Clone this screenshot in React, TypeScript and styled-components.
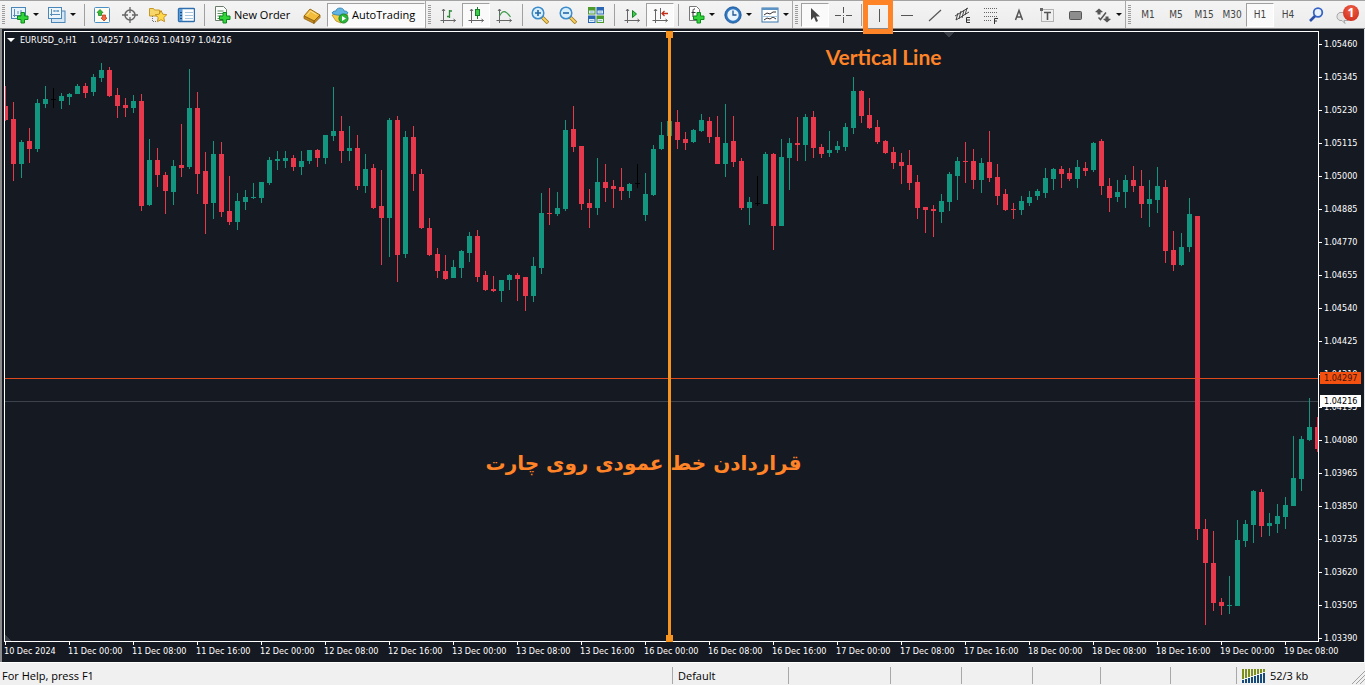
import React from 'react';
import styled, { createGlobalStyle, css } from 'styled-components';

const UI_FONT = '"Open Sans", "Noto Sans", sans-serif';
const CHART_FONT = '"DejaVu Sans Condensed", "DejaVu Sans", sans-serif';
const BULL = '#12967f';
const BEAR = '#e8384c';
const MARK = '#ff8427';
const LINE = '#f7941f';

const GlobalStyle = createGlobalStyle`
  * { box-sizing: border-box; }
  body { margin: 0; background: #f0f0f0; font-family: ${UI_FONT}; }
`;

const Terminal = styled.div`
  display: flex;
  flex-direction: column;
  height: 100vh;
  overflow: hidden;
`;

/* ---------- toolbar ---------- */

const Toolbar = styled.header`
  display: flex;
  flex: none;
  height: 29px;
  background: linear-gradient(#f4f4f4, #ececec);
  border-top: 1px solid #a3a3a3;
  border-bottom: 1px solid #8a8a8a;
`;

const Group = styled.div`
  display: flex;
  align-items: center;
  flex: none;
  & + & { box-shadow: -1px 0 0 #a8a8a8; }
`;

const Grip = styled.span<{ $narrow?: boolean }>`
  flex: none;
  width: ${p => (p.$narrow ? 6 : 8)}px;
  height: 20px;
  background: repeating-linear-gradient(#9c9c9c 0 1px, transparent 1px 2px) 2px 0 / 3px 20px no-repeat;
`;

const Separator = styled.span`
  flex: none;
  width: 8px;
  height: 22px;
  background: linear-gradient(#a0a0a0, #a0a0a0) 4px 0 / 1px 22px no-repeat;
`;

const Tool = styled.button<{ $pressed?: boolean; $menu?: boolean }>`
  position: relative;
  display: flex;
  align-items: center;
  flex: none;
  gap: 4px;
  width: ${p => (p.$menu ? 37 : 28)}px;
  height: 24px;
  padding: 0 4px;
  border: 1px solid transparent;
  background: none;
  color: #444;
  font: 10px/20px ${CHART_FONT};
  ${p => p.$pressed && css`
    background: #fafafa;
    border-color: #a0a0a0 #fff #fff #a0a0a0;
  `}
  svg { flex: none; display: block; }
`;

const Period = styled(Tool)`
  justify-content: center;
  padding: 0;
`;

const TextTool = styled(Tool)`
  width: auto;
  gap: 3px;
  color: #000;
  font: 11px/20px ${UI_FONT};
  white-space: nowrap;
`;

const OrderTool = styled(TextTool)`
  width: 90px;
`;

const AutoTool = styled(TextTool)`
  width: 98px;
  margin: 0 1px;
  padding: 0 3px;
`;

const Caret = styled.i`
  flex: none;
  border: 3px solid transparent;
  border-top-color: #111;
  border-bottom: 0;
`;

const Highlight = styled.span`
  position: absolute;
  inset: -4px -1px -8px -3px;
  border: 5px solid ${MARK};
  z-index: 3;
`;

const Spread = styled(Group)`
  flex: 1;
`;

const Notice = styled(Tool)`
  margin-left: auto;
  margin-right: 4px;
  padding: 0;
`;

const Badge = styled.span`
  position: absolute;
  right: 1px;
  top: 1px;
  width: 16px;
  height: 16px;
  border-radius: 50%;
  background: radial-gradient(circle at 50% 30%, #f0604a, #c92614);
  color: #fff;
  font: bold 12px/16px ${UI_FONT};
  text-align: center;
`;

/* ---------- chart window ---------- */

const ChartWindow = styled.main`
  flex: 1;
  min-height: 0;
  display: grid;
  grid-template-columns: minmax(0, 1fr) 45px;
  grid-template-rows: minmax(0, 1fr) 20px;
  padding: 2px 0 0 2px;
  background: #151922;
  border-left: 2px solid #8b8b8b;
  border-right: 1px solid #dfe3e8;
  color: #fff;
  font: 9px/12px ${CHART_FONT};
`;

const Plot = styled.section`
  position: relative;
  border: 1px solid #fff;
  min-height: 0;
`;

const PlotArt = styled.svg`
  display: block;
  width: 100%;
  height: 100%;
  overflow: hidden;
`;

const Quote = styled.h1`
  position: absolute;
  left: 2px;
  top: 2px;
  display: flex;
  align-items: center;
  gap: 5px;
  margin: 0;
  font: inherit;
  white-space: pre;
`;

const Instrument = styled.span`
  min-width: 65px;
`;

const QuoteCaret = styled.i`
  border: 4px solid transparent;
  border-top-color: #fff;
  border-bottom: 0;
`;

const Handle = styled.span<{ $bottom?: boolean }>`
  position: absolute;
  left: 50.6%;
  ${p => (p.$bottom ? 'bottom: -1px;' : 'top: -1px;')}
  width: 7px;
  height: 7px;
  margin-left: -3px;
  background: ${LINE};
`;

const ToolLabel = styled.div`
  position: absolute;
  left: 62.5%;
  top: 10px;
  color: ${MARK};
  font: bold 21px/30px Lato, sans-serif;
  white-space: nowrap;
`;

const Caption = styled.div`
  position: absolute;
  left: 36.6%;
  top: 68.3%;
  color: ${MARK};
  font: bold 20px/30px "DejaVu Sans", sans-serif;
  white-space: nowrap;
`;

const PriceAxis = styled.div`
  position: relative;
  display: flex;
  flex-direction: column;
  justify-content: space-between;
  margin: 7px 0 -2px;
`;

const Price = styled.span`
  display: flex;
  align-items: center;
  gap: 2px;
  height: 12px;
  &::before { content: ''; width: 3px; height: 1px; background: #fff; }
`;

const PriceTag = styled.span<{ $alert?: boolean }>`
  position: absolute;
  left: 1px;
  width: 41px;
  height: 12px;
  padding-left: 4px;
  background: ${p => (p.$alert ? '#f4500f' : '#fff')};
  color: ${p => (p.$alert ? '#3a1408' : '#000')};
`;

const TimeAxis = styled.div`
  grid-column: 1 / -1;
  display: grid;
  grid-template-columns: repeat(21, minmax(0, 1fr));
  padding-right: 16px;
`;

const Time = styled.span`
  white-space: nowrap;
  &::before { content: ''; display: block; width: 1px; height: 3px; margin-left: 1px; background: #fff; }
`;

/* ---------- status bar ---------- */

const StatusBar = styled.footer`
  flex: none;
  display: grid;
  grid-template-columns: minmax(0, 672fr) 116fr 102fr 71fr 71fr 68fr 70fr 66fr 129fr;
  height: 23px;
  padding: 4px 0 1px;
  background: #f0f0f0;
  border-top: 1px solid #fff;
  color: #000;
  font: 11px/17px ${UI_FONT};
`;

const StatusCell = styled.span`
  position: relative;
  display: flex;
  align-items: center;
  gap: 4px;
  padding-left: 5px;
  white-space: nowrap;
  border-left: 1px solid #a8a8a8;
  &:first-child { border-left: 0; padding-left: 2px; }
`;

const Resize = styled.svg`
  position: absolute;
  right: 0;
  bottom: 0;
`;

/* ---------- icons ---------- */

const Svg = ({ children }: { children: React.ReactNode }) => (
  <svg width="18" height="18" viewBox="0 0 18 18" fill="none" aria-hidden="true">{children}</svg>
);

const Plus = ({ x = 6, y = 6 }: { x?: number; y?: number }) => (
  <path transform={`translate(${x} ${y})`} d="M4 .5h3.500V4h3.500v3.500H7.500V11H4V7.500H.5V4H4z" fill="#31d53a" stroke="#0c8a1c" />
);

const Axes = ({ children }: { children?: React.ReactNode }) => (
  <Svg>
    <path d="M4.500 3v14M1.500 14.500h15M3 5l1.500-2L6 5M14.500 13l2 1.500-2 1.500" stroke="#666" />
    {children}
  </Svg>
);

const NewChartIcon = () => (
  <Svg>
    <rect x=".5" y="1.500" width="14" height="11" fill="#e9f3fb" stroke="#4b86b8" />
    <path d="M3.500 3v8M2 9.500h11M10 4v4M7 5v3" stroke="#5a8db8" />
    <Plus x={6} y={6} />
  </Svg>
);
const ProfilesIcon = () => (
  <Svg>
    <rect x="3.500" y="5" width="13.500" height="11.500" fill="#d5e6f4" stroke="#4b86b8" />
    <rect x=".5" y="1.500" width="13" height="11" fill="#eef6fc" stroke="#4b86b8" />
    <path d="M3.500 3v7M2 8.500h10M6 5h5M6 4v2M10 4v2" stroke="#5a8db8" />
  </Svg>
);
const MarketIcon = () => (
  <Svg>
    <rect x="1.500" y="1.500" width="15" height="15" rx="1" fill="#fffdf2" stroke="#4a90c8" />
    <path d="M7 3.500l3 3-1.500.5v2.500h-3V7L4 6.500z" fill="#35bd35" stroke="#137a1c" strokeWidth=".7" />
    <path d="M11 15l-3-3 1.500-.5V9h3v2.500l1.500.5z" fill="#f26a3d" stroke="#b2321a" strokeWidth=".7" />
  </Svg>
);
const TargetIcon = () => (
  <Svg>
    <circle cx="9" cy="9" r="5" stroke="#666" strokeWidth="1.500" />
    <path d="M9 1v6M9 11v6M1 9h6M11 9h6" stroke="#666" strokeWidth="1.300" />
  </Svg>
);
const FavoritesIcon = () => (
  <Svg>
    <path d="M.5 2.500h4l1 1.500h5v6H.5z" fill="#f7d66a" stroke="#c79a26" />
    <path d="M3.500 10v6M4 15.500h4" stroke="#777" strokeDasharray="1 1" />
    <path d="M12 4.500l1.800 3.700 4 .5-3 2.800.8 4.200L12 13.700l-3.600 2 .8-4.200-3-2.800 4-.5z" fill="#ffd84b" stroke="#bd8a1a" strokeWidth=".9" />
  </Svg>
);
const ListIcon = () => (
  <Svg>
    <rect x="1.500" y="2.500" width="16" height="13" rx="1" fill="#fff" stroke="#2f6fae" strokeWidth="1.400" />
    <path d="M2 3h3.500v12H2z" fill="#5b9bd8" />
    <path d="M8 6.500h8M8 9.500h8M8 12.500h8" stroke="#a9c6df" />
    <path d="M3 6.500h2M3 9.500h2M3 12.500h2" stroke="#1d4b7c" />
  </Svg>
);
const OrderIcon = () => (
  <Svg>
    <path d="M2.500.5h8l3 3v11h-11z" fill="#fbfdfb" stroke="#6b7c6b" />
    <path d="M4.500 5h6M4.500 7.500h7M4.500 10h4M4.500 12.500h4" stroke="#5d8b62" />
    <Plus x={6} y={6} />
  </Svg>
);
const EditorIcon = () => (
  <Svg>
    <path d="M1 10l6-7 10 6-6 6z" fill="#f3bd3b" stroke="#9b6c12" />
    <path d="M1 10v2.500L11 17.500V15zM11 15v2.500l6-6V9z" fill="#c98c1c" stroke="#8e6110" strokeWidth=".8" />
    <path d="M4 9.500L7.500 5l6 3.600" stroke="#fde39b" />
  </Svg>
);
const AutoIcon = () => (
  <Svg>
    <path d="M1 9l8-2 8 2-7 8-5-2z" fill="#f5cf4b" stroke="#b58c1c" strokeWidth=".8" />
    <path d="M1 7c1-2 3-2 4-2 0-4 8-4 8 0 2 0 3 0 4 2-3 3-13 3-16 0z" fill="#62b5e3" stroke="#2c7cae" strokeWidth=".8" />
    <circle cx="12.500" cy="12.500" r="4.600" fill="#2eb53c" stroke="#0f7a1e" strokeWidth=".8" />
    <path d="M11 10v5l4-2.500z" fill="#fff" />
  </Svg>
);
const BarsIcon = () => <Axes><path d="M10.500 4v8M8 10.500h2.500M10.500 5h2.500" stroke="#2f8a3b" strokeWidth="1.300" /></Axes>;
const CandleIcon = () => <Axes><path d="M10.500 1v12" stroke="#1b7a28" /><rect x="8.500" y="3.500" width="4" height="6" fill="#3ecb4a" stroke="#15812a" /></Axes>;
const LineIcon = () => <Axes><path d="M4.500 10c3-6 6-6 11 1" stroke="#3f9a4b" strokeWidth="1.200" /></Axes>;
const ZoomIcon = ({ plus }: { plus?: boolean }) => (
  <Svg>
    <path d="M11 11l6 6" stroke="#a27a1c" strokeWidth="3.600" />
    <path d="M11.500 11.500l5 5" stroke="#f5d265" strokeWidth="1.800" />
    <circle cx="7" cy="7" r="5.800" fill="#d8eefb" stroke="#3c8ccb" strokeWidth="1.500" />
    <path d={plus ? 'M4 7h6M7 4v6' : 'M4 7h6'} stroke="#2368a8" strokeWidth="1.600" />
  </Svg>
);
const TilesIcon = () => (
  <Svg>
    <path d="M1 1h7.500v7.500H1zM9.500 9.500H17V17H9.500z" fill="#4c9a2c" />
    <path d="M9.500 1H17v7.500H9.500zM1 9.500h7.500V17H1z" fill="#2b66b3" />
    <path d="M2 4.500h5.500v3H2zM10.500 4.500H16v3h-5.500zM2 13h5.500v3H2zM10.500 13H16v3h-5.500z" fill="#dcecf8" />
    <path d="M3 6h3.500M11.500 6H15M3 14.500h3.500M11.500 14.500H15" stroke="#8fb4cf" />
  </Svg>
);
const ScrollIcon = () => <Axes><path d="M9.500 4.500v7l4-3.500z" fill="#3ecb4a" stroke="#15812a" /></Axes>;
const ShiftIcon = () => <Axes><path d="M9.500 2v11" stroke="#666" /><path d="M11 7.500h6M13.500 5L11 7.500l2.500 2.500" stroke="#c22d1a" strokeWidth="1.300" /></Axes>;
const IndicatorIcon = () => (
  <Svg>
    <path d="M2.500.5h7l3 3v11h-10z" fill="#fff" stroke="#777" />
    <path d="M8 3c-2-.5-2 1-2 3v5M4.500 6.500h4" stroke="#333" />
    <Plus x={6} y={6} />
  </Svg>
);
const ClockIcon = () => (
  <Svg>
    <circle cx="9" cy="9" r="7" fill="#e8f4fd" stroke="#2f76bf" strokeWidth="2.600" />
    <circle cx="9" cy="9" r="8.200" stroke="#174f90" strokeWidth=".7" />
    <path d="M9 4.500V9h3.500" stroke="#20558f" strokeWidth="1.300" />
  </Svg>
);
const TemplateIcon = () => (
  <Svg>
    <rect x="1" y="2" width="16" height="14" fill="#fff" stroke="#3a78b0" />
    <path d="M1 3h16" stroke="#5b93c4" strokeWidth="2" />
    <path d="M3 9l3-2 3 1 3-2 3 0M3 14l3-2 3 1 3-2 3 2" stroke="#333" />
    <path d="M2 10.500h14" stroke="#a9c6df" />
  </Svg>
);
const CursorIcon = () => <Svg><path d="M5 2v12l3-3 2 5 2-1-2-4.500h4z" fill="#444" /></Svg>;
const CrossIcon = () => <Svg><path d="M9.500 1v6M9.500 11v6M1 9.500h6M12 9.500h6M9 9.500h1" stroke="#555" /></Svg>;
const VLineIcon = () => <Svg><path d="M9.500 3v13" stroke="#555" /></Svg>;
const HLineIcon = () => <Svg><path d="M3 9.500h12" stroke="#555" /></Svg>;
const TrendIcon = () => <Svg><path d="M3 15L15 4" stroke="#555" strokeWidth="1.200" /></Svg>;
const ChannelIcon = () => (
  <Svg>
    <path d="M1 10L14 2M2 14l13-8M4 7l-2 7M7 5l-2 8M10 4l-2 8M13 2l-2 7" stroke="#444" />
    <path d="M16 11.500h-3.500v5H16M12.500 14H16" stroke="#333" />
  </Svg>
);
const FiboIcon = () => (
  <Svg>
    <path d="M2 2.500h14M2 6.500h14M2 10.500h14M2 14.500h8" stroke="#666" strokeDasharray="1 1" />
    <path d="M16 12.500h-3.500V18M12.500 15H15" stroke="#333" />
  </Svg>
);
const LetterIcon = () => <Svg><path d="M5.500 14L9 4.500l3.500 9.500M7 11h4" stroke="#555" strokeWidth="1.500" /></Svg>;
const TextBoxIcon = () => (
  <Svg>
    <rect x="3.500" y="3.500" width="12" height="12" stroke="#777" strokeDasharray="1 1" />
    <path d="M6 6.500h7M9.500 6.500V14" stroke="#555" strokeWidth="1.600" />
    <path d="M2 2h3v3H2z" fill="#666" />
  </Svg>
);
const RectIcon = () => <Svg><rect x="3.500" y="5.500" width="12" height="8" rx="1" fill="#8d8d8d" stroke="#555" /></Svg>;
const ArrowsIcon = () => (
  <Svg>
    <path d="M5 2.500l4 3.500-2.500.5v2h-3v-2L1 6zM13 16.500L9 13l2.500-.5v-2h3v2L17 13z" fill="#555" />
    <path d="M4.500 11.500l2 2 5.500-7" stroke="#555" strokeWidth="1.500" />
  </Svg>
);
const SearchIcon = () => (
  <Svg>
    <circle cx="11" cy="6.500" r="4.300" fill="#eaf3fd" stroke="#3763c4" strokeWidth="1.800" />
    <path d="M8 10l-5 5" stroke="#2a4faa" strokeWidth="2.600" />
  </Svg>
);
const ChatIcon = () => <Svg><path d="M6 6.500h8v8h-4l1 3-3-3H6c-4-1-4-7 0-8z" fill="#e3e3e3" stroke="#a5a5a5" /></Svg>;

/* ---------- data ---------- */

type Candle = [kind: 'u' | 'd' | 'n', high: number, top: number, bottom: number, low: number];

const parseCandles = (source: string): Candle[] =>
  source.trim().split(/\s+/).map(item => {
    const [high, top, bottom, low] = item.slice(1).split(',').map(Number);
    return [item[0] as Candle[0], high, top, bottom, low];
  });

const candles = parseCandles(`
d86,106,120,121 d102,119,164,181 u140,142,164,178 d128,141,149,163 u99,103,149,152 u86,99,104,108
n88,99,100,108 u93,96,101,109 u93,94,97,105 u84,86,94,94 d83,86,93,98 u74,77,92,96 u63,70,78,82
d67,70,96,97 d88,95,106,118 d98,105,108,117 u95,101,108,113 d94,101,206,211 u139,160,205,206
d148,160,175,187 d172,175,191,214 u160,166,192,205 d124,165,168,177 u69,108,167,169 d92,108,174,194
d152,171,204,234 u141,154,203,219 d142,154,212,217 d176,211,222,225 u193,201,222,230 u190,197,202,210
u183,197,198,199 u182,182,198,203 u157,160,183,185 u151,159,161,170 u151,158,161,168 d155,158,167,171
u151,161,167,175 u150,150,161,164 d149,150,158,167 u135,135,158,164 u87,131,136,141 d116,131,151,163
u126,148,151,161 d135,148,186,190 u154,169,186,193 d164,168,208,209 d170,206,218,265 u118,120,218,257
d116,120,255,282 u131,137,254,258 d126,137,174,191 d169,174,228,229 d218,228,255,256 d248,254,271,278
d255,271,279,280 u260,267,278,278 u250,251,268,278 u232,236,253,262 d230,236,277,282 d271,275,290,291
d276,289,291,292 u280,280,291,302 u274,275,280,290 d273,275,279,301 d277,277,296,311 u257,266,296,302
u193,213,268,274 d188,213,214,225 u192,208,214,216 u120,130,209,211 d106,129,147,152 d146,146,204,210
d189,203,208,228 u158,182,208,215 d164,182,188,202 d180,186,189,208 d168,187,191,200 u183,184,191,198
n164,183,184,188 u173,194,215,221 u145,149,195,196 u122,135,149,150 u115,121,136,141 d110,122,140,149
d132,139,143,150 u129,130,142,143 u114,120,131,132 d117,121,137,143 d116,137,164,164 u104,143,164,177
d116,141,162,167 d158,161,208,210 u197,202,208,225 n176,203,204,206 u152,154,204,204 d153,154,226,250
u139,157,226,226 u138,143,158,190 d117,143,145,161 u114,117,145,161 d111,117,148,158 d144,147,154,158
u131,150,153,157 u141,146,150,153 u123,127,147,151 u77,91,128,134 d90,91,116,123 d98,115,128,129
d120,127,142,144 d140,141,153,154 d147,152,163,169 d153,162,166,184 d150,165,183,190 d175,182,208,219
d207,207,210,233 d205,209,211,237 u194,201,212,223 u172,174,202,211 u157,161,176,200 d142,161,162,183
d149,161,180,189 u158,163,180,193 d131,162,178,182 d164,177,196,205 d189,194,210,211 d203,209,210,219
u196,201,210,215 u191,197,203,206 u189,191,196,200 u168,178,193,198 u168,169,179,190 d166,169,174,188
d168,173,179,181 u160,167,179,188 d162,168,171,176 u142,143,170,172 d139,141,186,195 d178,186,198,212
u180,192,197,202 u175,180,192,208 d166,180,186,192 d170,186,204,218 u180,199,204,227 u167,186,200,213
d180,187,251,263 d231,250,265,271 u233,247,265,266 u198,214,247,252 d216,216,529,540 d519,529,563,625
d531,563,603,611 d598,602,606,615 u576,605,606,614 u520,540,606,606 u520,524,541,547 u490,491,525,543
d489,492,526,537 u513,523,526,536 u504,516,524,533 u497,505,517,529 u436,478,506,506 u436,439,479,491
u398,427,440,441 d417,427,449,452
`);

const MAX_PRICE = 1.0546;
const MIN_PRICE = 1.0339;
const prices = Array.from({ length: 19 }, (_, i) => (MAX_PRICE - i * 0.00115).toFixed(5));
const priceTop = (price: number) => `calc((100% - 12px) * ${(MAX_PRICE - price) / (MAX_PRICE - MIN_PRICE)})`;

const times = [
  '10 Dec 2024',
  ...[11, 12, 13, 16, 17, 18].flatMap(day => ['00:00', '08:00', '16:00'].map(hour => `${day} Dec ${hour}`)),
  '19 Dec 00:00',
  '19 Dec 08:00',
];

const CANDLE_FILL = { u: BULL, d: BEAR, n: '#000' };

const CandleChart = () => (
  <PlotArt viewBox="5 32 1313 609" preserveAspectRatio="none" shapeRendering="crispEdges" role="img" aria-label="EURUSD hourly candles">
    <path d="M943 32h12l-6 5z" fill="#3b3f48" />
    <path d="M5 635v6h6z" fill="#3b3f48" />
    <rect x="5" y="401" width="1313" height="1" fill="#3d434d" />
    {candles.map(([kind, high, top, bottom, low], i) => {
      const x = 5 + i * 8;
      return (
        <g key={i} fill={CANDLE_FILL[kind]}>
          <rect x={x} y={high} width="1" height={low - high} />
          <rect x={x - 2} y={top} width="5" height={bottom - top} />
        </g>
      );
    })}
    <rect x="5" y="378" width="1313" height="1" fill="#dd4a1e" />
    <rect x="668" y="32" width="3" height="609" fill={LINE} />
  </PlotArt>
);

const TrafficIcon = () => (
  <svg width="24" height="14" viewBox="0 0 24 14" aria-hidden="true">
    {Array.from({ length: 8 }, (_, i) => (
      <g key={i}>
        <rect x={i * 3} y="0" width="2" height={10 - i} fill="#7f8f1c" />
        <rect x={i * 3} y={11 - i} width="2" height={3 + i} fill="#164a78" />
      </g>
    ))}
  </svg>
);

export default function App() {
  return (
    <Terminal>
      <GlobalStyle />
      <Toolbar>
        <Group>
          <Grip $narrow />
          <Tool $menu aria-label="New chart"><NewChartIcon /><Caret /></Tool>
          <Tool $menu aria-label="Profiles"><ProfilesIcon /><Caret /></Tool>
          <Separator />
          <Tool aria-label="Market watch"><MarketIcon /></Tool>
          <Tool aria-label="Data window"><TargetIcon /></Tool>
          <Tool aria-label="Navigator"><FavoritesIcon /></Tool>
          <Tool aria-label="Terminal"><ListIcon /></Tool>
          <Separator />
          <OrderTool><OrderIcon />New Order</OrderTool>
          <Tool aria-label="MetaEditor"><EditorIcon /></Tool>
          <AutoTool $pressed><AutoIcon />AutoTrading</AutoTool>
        </Group>
        <Group>
          <Grip />
          <Tool aria-label="Bar chart"><BarsIcon /></Tool>
          <Tool $pressed aria-label="Candlesticks"><CandleIcon /></Tool>
          <Tool aria-label="Line chart"><LineIcon /></Tool>
          <Separator />
          <Tool aria-label="Zoom in"><ZoomIcon plus /></Tool>
          <Tool aria-label="Zoom out"><ZoomIcon /></Tool>
          <Tool aria-label="Tile windows"><TilesIcon /></Tool>
          <Separator />
          <Tool aria-label="Auto scroll"><ScrollIcon /></Tool>
          <Tool $pressed aria-label="Chart shift"><ShiftIcon /></Tool>
          <Separator />
          <Tool $menu aria-label="Indicators"><IndicatorIcon /><Caret /></Tool>
          <Tool $menu aria-label="Periods"><ClockIcon /><Caret /></Tool>
          <Tool $menu aria-label="Templates"><TemplateIcon /><Caret /></Tool>
        </Group>
        <Group>
          <Grip />
          <Tool $pressed aria-label="Cursor"><CursorIcon /></Tool>
          <Tool aria-label="Crosshair"><CrossIcon /></Tool>
          <Separator />
          <Tool aria-label="Vertical line"><VLineIcon /><Highlight /></Tool>
          <Tool aria-label="Horizontal line"><HLineIcon /></Tool>
          <Tool aria-label="Trendline"><TrendIcon /></Tool>
          <Tool aria-label="Equidistant channel"><ChannelIcon /></Tool>
          <Tool aria-label="Fibonacci retracement"><FiboIcon /></Tool>
          <Tool aria-label="Text"><LetterIcon /></Tool>
          <Tool aria-label="Text label"><TextBoxIcon /></Tool>
          <Tool aria-label="Rectangle"><RectIcon /></Tool>
          <Tool $menu aria-label="Arrows"><ArrowsIcon /><Caret /></Tool>
        </Group>
        <Spread>
          <Grip />
          {['M1', 'M5', 'M15', 'M30', 'H1', 'H4'].map(name => (
            <Period key={name} $pressed={name === 'H1'}>{name}</Period>
          ))}
          <Tool aria-label="Search"><SearchIcon /></Tool>
          <Notice aria-label="Notifications"><ChatIcon /><Badge>1</Badge></Notice>
        </Spread>
      </Toolbar>

      <ChartWindow>
        <Plot>
          <CandleChart />
          <Handle />
          <Handle $bottom />
          <Quote><QuoteCaret /><Instrument>EURUSD_o,H1</Instrument>1.04257 1.04263 1.04197 1.04216</Quote>
          <ToolLabel>Vertical Line</ToolLabel>
          <Caption lang="fa" dir="rtl">قراردادن خط عمودی روی چارت</Caption>
        </Plot>
        <PriceAxis>
          {prices.map(price => <Price key={price}>{price}</Price>)}
          <PriceTag $alert style={{ top: priceTop(1.04297) }}>1.04297</PriceTag>
          <PriceTag style={{ top: priceTop(1.04216) }}>1.04216</PriceTag>
        </PriceAxis>
        <TimeAxis>
          {times.map(time => <Time key={time}>{time}</Time>)}
        </TimeAxis>
      </ChartWindow>

      <StatusBar>
        <StatusCell>For Help, press F1</StatusCell>
        <StatusCell>Default</StatusCell>
        <StatusCell />
        <StatusCell />
        <StatusCell />
        <StatusCell />
        <StatusCell />
        <StatusCell />
        <StatusCell>
          <TrafficIcon />52/3 kb
          <Resize width="14" height="14" viewBox="0 0 14 14" stroke="#a0a0a0" aria-hidden="true">
            <path d="M1 14L14 1M5 14l9-9M9 14l5-5" />
          </Resize>
        </StatusCell>
      </StatusBar>
    </Terminal>
  );
}
